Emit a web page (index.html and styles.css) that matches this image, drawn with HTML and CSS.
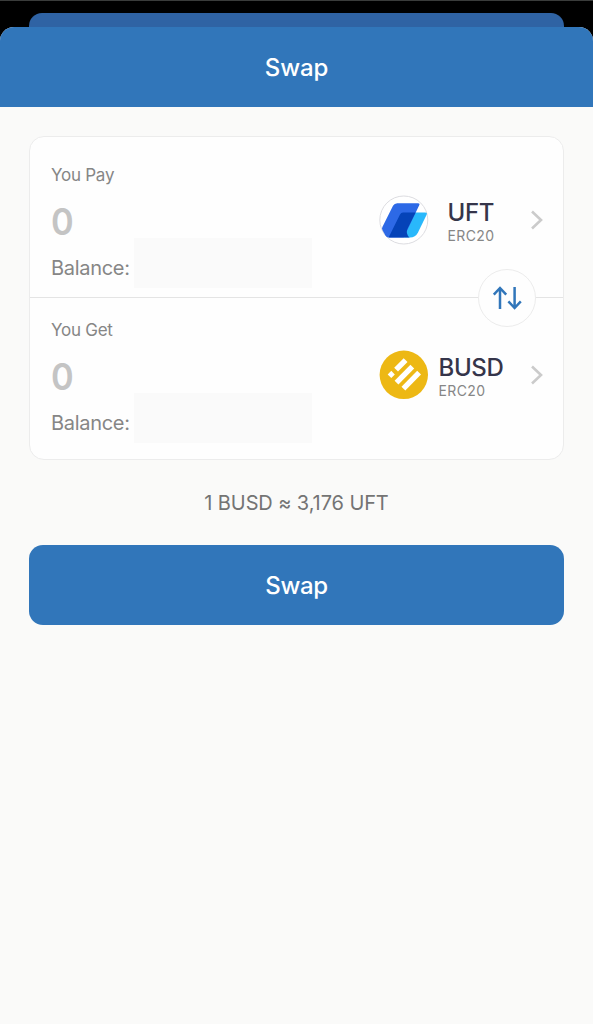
FILE: index.html
```
<!DOCTYPE html>
<html lang="en">
<head>
	<meta charset="UTF-8">
	<title>Swap</title>
	<link rel="stylesheet" href="styles.css">
</head>
<body>
	<!-- page behind the sheet -->
	<div class="behind"></div>

	<div class="sheet">
		<div class="header">Swap</div>

		<div class="main">
			<div class="card">
				<!-- pay -->
				<div class="row pay">
					<div class="amount">
						<p class="label">You Pay</p>
						<p class="num">0</p>
						<div class="balance"><span>Balance:</span><i class="mask"></i></div>
					</div>
					<a href="#" class="token">
						<svg class="logo" viewBox="0 0 50 50">
							<circle cx="24.8" cy="25" r="24" fill="#fff" stroke="#dcdce0" stroke-width="1"/>
							<path d="M35 17.6H46.2Q48.6 17.6 47.6 19.8L39 37.4Q36.4 42.5 31 42.5H25Z" fill="#29b8fb"/>
							<path d="M18.2 8.2H39Q41.2 8.2 40.2 10.2L24.8 42.5H9.6Q7.6 42.5 6.4 40.4L3.4 35Q2.6 33.6 3.4 32L14 10.8Q15.4 8.2 18.2 8.2Z" fill="#2d69e6"/>
							<path d="M24 17.6H36.6L28.6 33.6Q26.2 39 30.6 42.5H9.6L21 19.6Q22 17.6 24 17.6Z" fill="#0543b8"/>
						</svg>
						<div class="name">
							<div>
								<p class="symbol">UFT</p>
								<p class="type">ERC20</p>
							</div>
						</div>
						<svg class="arrow" viewBox="0 0 14 20"><path d="M2 1.5L11 10L2 18.5" fill="none" stroke="#cbcbcb" stroke-width="2.6"/></svg>
					</a>
				</div>

				<!-- get -->
				<div class="row get">
					<div class="amount">
						<p class="label">You Get</p>
						<p class="num">0</p>
						<div class="balance"><span>Balance:</span><i class="mask"></i></div>
					</div>
					<a href="#" class="token">
						<svg class="logo" viewBox="0 0 50 50">
							<circle cx="24.8" cy="24.8" r="24.2" fill="#edb814"/>
							<g fill="#fff">
								<path d="M24.7 8.2L28.5 12L19 21.6L15.2 17.8Z"/>
								<path d="M12.3 20.8L15.8 24.4L12.3 28L8.7 24.4Z"/>
								<path d="M31.4 14.7L35.2 18.5L19.4 34.5L15.6 30.7Z"/>
								<path d="M38.2 20.8L42 24.6L26.3 40.6L22.5 36.8Z"/>
							</g>
						</svg>
						<div class="name">
							<div>
								<p class="symbol">BUSD</p>
								<p class="type">ERC20</p>
							</div>
						</div>
						<svg class="arrow" viewBox="0 0 14 20"><path d="M2 1.5L11 10L2 18.5" fill="none" stroke="#cbcbcb" stroke-width="2.6"/></svg>
					</a>
				</div>

				<!-- switch button, sits over the divider -->
				<a href="#" class="switch">
					<svg viewBox="0 0 30 24"><path d="M8 23V2M1.8 8.6L8 2L14.2 8.6M22.6 1V22M16.4 15.4L22.6 22L28.8 15.4" fill="none" stroke="#3176ba" stroke-width="2.5"/></svg>
				</a>
			</div>

			<p class="rate">1 BUSD ≈ 3,176 UFT</p>
			<a href="#" class="btn">Swap</a>
		</div>
	</div>
</body>
</html>
```
FILE: styles.css
```
*{
	margin: 0;padding: 0;
	box-sizing: border-box;
}
body{
	height: 1024px;
	background: #000;
	border-top: 1px solid #3a3c3b;
	padding-top: 12px;
	overflow: hidden;
	font-family: Inter, "Liberation Sans", sans-serif;
	display: flex;
	flex-direction: column;
}
a{
	text-decoration: none;
	color: inherit;
}
.behind{
	height: 14px;
	margin: 0 29px;
	background: #2f63a4;
	border-radius: 13px 13px 0 0;
}
.sheet{
	flex: 1;
	background: #fafaf9;
	border-radius: 14px 14px 0 0;
	overflow: hidden;
}
.header{
	height: 80px;
	line-height: 81px;
	background: #3176ba;
	color: #fff;
	text-align: center;
	font-size: 24px;
	font-weight: 500;
	letter-spacing: -0.1px;
}
.main{
	padding: 29px 29px 0;
}
.card{
	position: relative;
	height: 324px;
	background: #fefefe;
	border: 1px solid #ececec;
	border-radius: 15px;
}
.row{
	height: 161px;
	padding: 0 19px 0 21px;
	display: flex;
	justify-content: space-between;
	align-items: flex-start;
}
.pay{
	padding-top: 26px;
	border-bottom: 1px solid #e4e4e4;
}
.get{
	padding-top: 20px;
}
.label{
	font-size: 17px;
	line-height: 24px;
	letter-spacing: -0.25px;
	color: #868686;
}
.num{
	margin-top: 12px;
	font-size: 37px;
	font-weight: 600;
	line-height: 46px;
	color: #c4c4c4;
	transform: scaleX(0.93);
	transform-origin: left;
}
.balance{
	height: 50px;
	margin-top: -7px;
	display: flex;
	align-items: center;
	gap: 4px;
	font-size: 20px;
	letter-spacing: -0.3px;
	color: #868686;
}
.balance span{
	width: 79px;
	padding-top: 10px;
	white-space: nowrap;
}
.mask{
	width: 178px;
	height: 50px;
	background: #fafafa;
}
.token{
	height: 50px;
	margin-top: 32px;
	display: flex;
	align-items: center;
}
.logo{
	width: 50px;
	height: 50px;
}
.name{
	width: 83px;
	padding: 3px 0 0 1px;
	display: flex;
	justify-content: center;
}
.symbol{
	font-size: 24px;
	font-weight: 500;
	line-height: 28px;
	letter-spacing: -0.3px;
	color: #35354a;
}
.type{
	font-size: 14px;
	line-height: 18px;
	letter-spacing: 0.4px;
	color: #868686;
}
.arrow{
	width: 14px;
	height: 20px;
	margin-left: 18px;
}
.switch{
	position: absolute;
	top: 132px;
	right: 27px;
	width: 58px;
	height: 58px;
	background: #fefefe;
	border: 1px solid #ececec;
	border-radius: 50%;
	display: flex;
	align-items: center;
	justify-content: center;
}
.switch svg{
	width: 30px;
	height: 24px;
}
.rate{
	margin-top: 28px;
	line-height: 30px;
	font-size: 20px;
	letter-spacing: -0.1px;
	text-align: center;
	color: #747474;
}
.btn{
	display: block;
	height: 80px;
	margin-top: 27px;
	line-height: 82px;
	background: #3176ba;
	border-radius: 14px;
	color: #fff;
	text-align: center;
	font-size: 24px;
	font-weight: 500;
	letter-spacing: -0.3px;
}
```
